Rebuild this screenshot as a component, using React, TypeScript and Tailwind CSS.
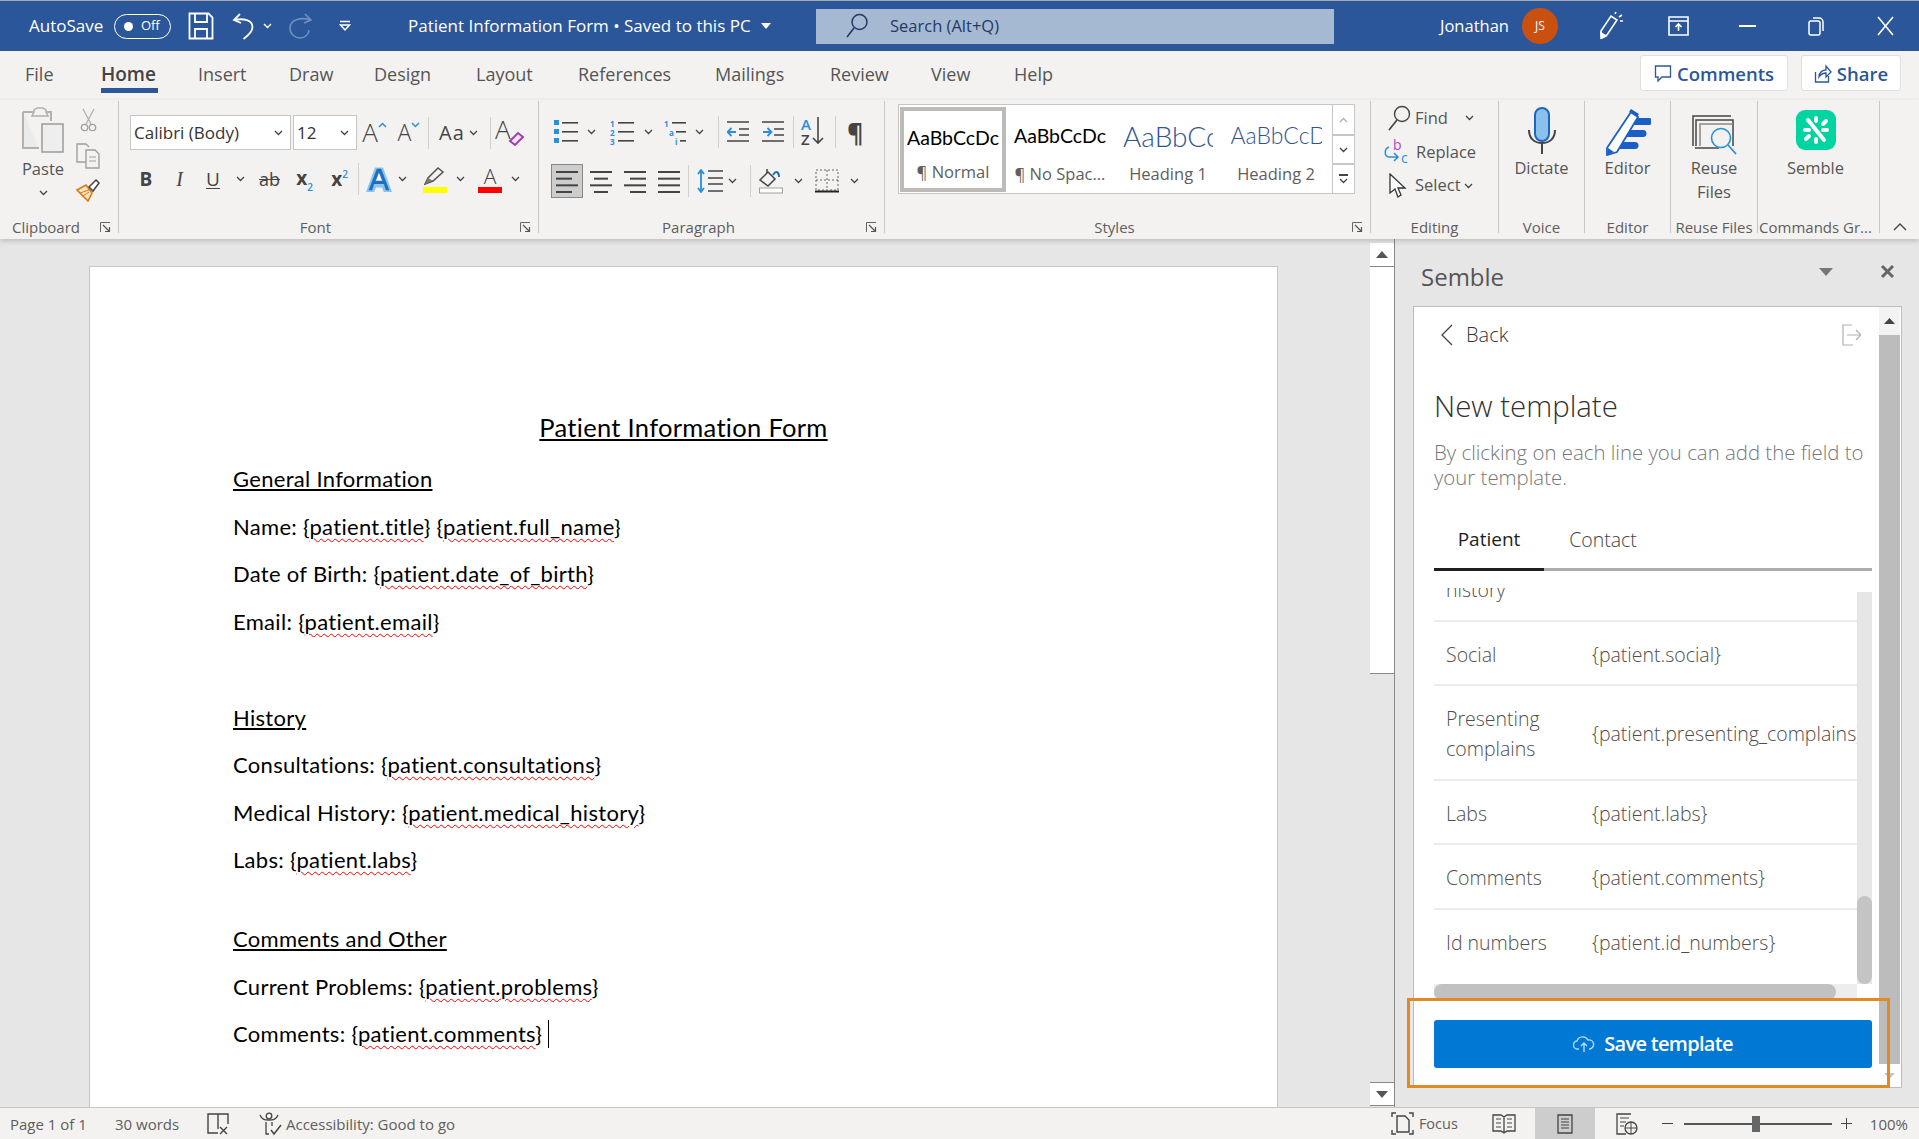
import React from 'react';

const DARK = '#444444';
const BLUE = '#2b8fd8';

function Chev({ className = '' }: { className?: string }) {
  return (
    <svg width="9" height="6" viewBox="0 0 9 6" className={className}>
      <path d="M1 1l3.5 3.5L8 1" fill="none" stroke={DARK} strokeWidth="1.3" />
    </svg>
  );
}

function Launcher() {
  return (
    <svg width="11" height="11" viewBox="0 0 11 11">
      <path d="M.5 10V.5H10" fill="none" stroke="#666" />
      <path d="M3 3l6 6M9.5 5v4.5H5" fill="none" stroke="#555" strokeWidth="1.2" />
    </svg>
  );
}

function Sep({ h = 'h-[32px]' }: { h?: string }) {
  return <div className={`w-px bg-[#d2d0ce] ${h}`} />;
}

// one ribbon group, label row sticks out a little under the divider
function Group({ w, label, launcher, labelClass = '', children }: { w: string; label: string; launcher?: boolean; labelClass?: string; children: React.ReactNode }) {
  return (
    <div className={`flex h-[132px] shrink-0 flex-col border-r border-[#c8c6c4] ${w}`}>
      <div className="h-[117px] shrink-0">{children}</div>
      <div className="-mb-[3px] flex h-[18px] shrink-0 items-center text-[15px] text-[#605e5c]">
        <div className={`min-w-0 flex-1 whitespace-nowrap text-center ${labelClass}`}>{label}</div>
        {launcher && (
          <div className="flex w-[26px] justify-center pl-[1px]">
            <Launcher />
          </div>
        )}
      </div>
    </div>
  );
}

function Lines({ rows, w = 33 }: { rows: [number, number][]; w?: number }) {
  return (
    <svg width={w} height="26" viewBox={`0 0 ${w} 26`}>
      {rows.map(([x, len], i) => (
        <rect key={i} x={x} y={3 + i * (20 / (rows.length - 1))} width={len} height="2" fill={DARK} />
      ))}
    </svg>
  );
}

function TitleBar() {
  return (
    <div className="flex h-[51px] shrink-0 items-center border-t border-[#a9a9a9] bg-[#2b579a] text-white">
      <div className="ml-[29px] w-[85px] whitespace-nowrap text-[17px]">AutoSave</div>
      <div className="flex h-[25px] w-[57px] items-center rounded-full border-[1.5px] border-white pl-[9px]">
        <div className="h-[9px] w-[9px] rounded-full bg-white" />
        <span className="ml-[8px] text-[13px]">Off</span>
      </div>
      <svg width="26" height="28" viewBox="0 0 26 28" className="ml-[17px]">
        <path d="M1.5 1.5h19l4 4v21h-23z" fill="none" stroke="#fff" strokeWidth="1.8" />
        <path d="M7 2v8h12V2M7 26v-9h12v9" fill="none" stroke="#fff" strokeWidth="1.8" />
      </svg>
      <svg width="25" height="27" viewBox="0 0 25 27" className="ml-[18px]">
        <path d="M8 1L2 7l7 3M2.5 7c9-2 18 0 18 7 0 5-5 9-9 12" fill="none" stroke="#fff" strokeWidth="1.8" />
      </svg>
      <svg width="9" height="6" viewBox="0 0 9 6" className="ml-[6px]">
        <path d="M1 1l3.5 3.5L8 1" fill="none" stroke="#fff" strokeWidth="1.4" />
      </svg>
      <svg width="25" height="27" viewBox="0 0 25 27" className="ml-[16px]">
        <path d="M17 1l6 6-7 3M22 7C14 4 2 6 2 15c0 6 5 10 10 10s9-4 9-8" fill="none" stroke="#6f8fbd" strokeWidth="1.6" />
      </svg>
      <svg width="12" height="12" viewBox="0 0 12 12" className="ml-[26px]">
        <path d="M1 1.5h10M1.5 5h9L6 10z" fill="none" stroke="#fff" strokeWidth="1.5" />
      </svg>
      <div className="ml-[57px] w-[351px] whitespace-nowrap text-[17px]">Patient Information Form • Saved to this PC</div>
      <svg width="10" height="6" viewBox="0 0 10 6" className="ml-[2px]">
        <path d="M0 0h10L5 6z" fill="#fff" />
      </svg>
      <div className="ml-[45px] flex h-[35px] w-[518px] items-center bg-[#a6b9d3] text-[#1f3a63]">
        <svg width="24" height="26" viewBox="0 0 24 26" className="ml-[29px]">
          <circle cx="14.5" cy="9" r="7.5" fill="none" stroke="#1f3a63" strokeWidth="1.5" />
          <path d="M9 15L2 24" stroke="#1f3a63" strokeWidth="1.6" />
        </svg>
        <span className="ml-[21px] text-[16.5px]">Search (Alt+Q)</span>
      </div>
      <div className="ml-[106px] w-[82px] whitespace-nowrap text-[16.5px]">Jonathan</div>
      <div className="flex h-[36px] w-[36px] items-center justify-center rounded-full bg-[#ca5010] text-[12px]">JS</div>
      <svg width="25" height="30" viewBox="0 0 25 30" className="ml-[40px]">
        <path d="M3 20L13 5l6 4L9 24l-6 3z" fill="none" stroke="#fff" strokeWidth="1.6" />
        <path d="M3 22l5 3-4 2zM17 3l1-2M21 6l3-2M22 10h3" stroke="#fff" strokeWidth="1.6" fill="#fff" />
      </svg>
      <svg width="21" height="20" viewBox="0 0 21 20" className="ml-[45px]">
        <path d="M1 1h19v18H1zM1 5h19" fill="none" stroke="#fff" strokeWidth="1.6" />
        <path d="M10.500 15V8M7.500 11l3-3 3 3" fill="none" stroke="#fff" strokeWidth="1.6" />
      </svg>
      <div className="ml-[50px] h-[2px] w-[17px] bg-white" />
      <svg width="17" height="20" viewBox="0 0 17 20" className="ml-[52px]">
        <rect x="1" y="5" width="11" height="14" rx="2" fill="none" stroke="#fff" strokeWidth="1.5" />
        <path d="M5 2h6a4 4 0 0 1 4 4v9" fill="none" stroke="#fff" strokeWidth="1.5" />
      </svg>
      <svg width="17" height="20" viewBox="0 0 17 20" className="ml-[52px]">
        <path d="M1 1l15 18M16 1L1 19" stroke="#fff" strokeWidth="1.6" />
      </svg>
    </div>
  );
}

function TabRow() {
  const tabs: [string, string][] = [
    ['File', 'w-[76px]'],
    ['Home', 'w-[97px]'],
    ['Insert', 'w-[91px]'],
    ['Draw', 'w-[85px]'],
    ['Design', 'w-[102px]'],
    ['Layout', 'w-[102px]'],
    ['References', 'w-[137px]'],
    ['Mailings', 'w-[115px]'],
    ['Review', 'w-[101px]'],
    ['View', 'w-[83px]'],
    ['Help', 'w-[80px]'],
  ];
  return (
    <div className="flex h-[49px] shrink-0 bg-[#f3f2f1] pl-[25px]">
      {tabs.map(([name, w]) => (
        <div key={name} className={`${w} pt-[10px]`}>
          <div className={`h-[27px] leading-[27px] ${name === 'Home' ? 'text-[19px] font-semibold text-[#444]' : 'text-[18px] text-[#555]'}`}>{name}</div>
          {name === 'Home' && <div className="h-[5px] w-[57px] bg-[#2b579a]" />}
        </div>
      ))}
      <div className="ml-auto flex pt-[4px] pr-[18px]">
        <div className="flex h-[36px] w-[148px] items-center justify-center rounded-[3px] border border-[#e1dfdd] bg-white pt-[1px] text-[18.5px] font-semibold text-[#2b579a]">
          <svg width="18" height="20" viewBox="0 0 18 20" className="mr-[5px]">
            <path d="M1.500 2h15v11H8l-4 4v-4H1.500z" fill="none" stroke="#2b579a" strokeWidth="1.3" />
          </svg>
          Comments
        </div>
        <div className="ml-[13px] flex h-[36px] w-[100px] items-center justify-center rounded-[3px] border border-[#e1dfdd] bg-white pt-[1px] text-[18.5px] font-semibold text-[#2b579a]">
          <svg width="18" height="20" viewBox="0 0 18 20" className="mr-[5px]">
            <path d="M1.500 8v10h13v-6M5 13c0-5 4-7 7-7V2l5 6-5 5V9c-3 0-5 1-7 4z" fill="none" stroke="#2b579a" strokeWidth="1.3" />
          </svg>
          Share
        </div>
      </div>
    </div>
  );
}

function Clipboard() {
  return (
    <Group w="w-[119px]" label="Clipboard" launcher>
      <div className="flex pt-[6px]">
        <div className="ml-[19px] flex w-[48px] flex-col items-center">
          <svg width="42" height="46" viewBox="0 0 42 46">
            <path d="M1 5h11M24 5h5v9M1 5v36h16" fill="#ebebeb" stroke="#b3b0ad" strokeWidth="2" />
            <path d="M12 5V3l3-2h6l3 2v2l2 4H10z" fill="#f3f2f1" stroke="#b3b0ad" strokeWidth="1.5" />
            <rect x="20" y="17" width="21" height="28" fill="#eeeeee" stroke="#a19f9d" strokeWidth="1.6" />
          </svg>
          <div className="mt-[5px] text-[16.5px] leading-[22px] text-[#555]">Paste</div>
          <Chev className="mt-[10px]" />
        </div>
        <div className="ml-[6px] flex w-[30px] flex-col items-center pt-[1px]">
          <svg width="17" height="24" viewBox="0 0 17 24">
            <path d="M3 1l8 15M14 1L6 16" stroke="#b3b0ad" strokeWidth="1.3" />
            <circle cx="4.500" cy="19.500" r="3.200" fill="none" stroke="#a19f9d" strokeWidth="1.3" />
            <circle cx="12.500" cy="19.500" r="3.200" fill="none" stroke="#a19f9d" strokeWidth="1.3" />
          </svg>
          <svg width="24" height="26" viewBox="0 0 24 26" className="mt-[11px]">
            <path d="M10 19H1V1h9l3 3" fill="none" stroke="#a19f9d" strokeWidth="1.4" />
            <path d="M10 7h9l4 4v14H10z" fill="#f3f2f1" stroke="#a19f9d" strokeWidth="1.4" />
            <path d="M13 14h7M13 18h7" stroke="#a19f9d" />
          </svg>
          <svg width="24" height="23" viewBox="0 0 24 23" className="mt-[10px]">
            <path d="M1 11l9-5 6 8-4 8z" fill="#fbe3c8" stroke="#d87b12" strokeWidth="1.6" />
            <path d="M4 14l9-3M7 17l6-4" stroke="#d87b12" />
            <path d="M13 8l7-7 3 3-6 8z" fill="#fff" stroke="#444" strokeWidth="1.5" />
          </svg>
        </div>
      </div>
    </Group>
  );
}

function Font() {
  return (
    <Group w="w-[420px]" label="Font" launcher>
      <div className="mt-[14px] flex h-[35px] items-center pl-[11px]">
        <div className="flex h-[35px] w-[161px] items-center justify-between border border-[#c8c6c4] bg-white pl-[3px] pr-[7px] text-[17px] text-[#333]">
          Calibri (Body) <Chev />
        </div>
        <div className="ml-[2px] flex h-[35px] w-[64px] items-center justify-between border border-[#c8c6c4] bg-white pl-[3px] pr-[7px] text-[17px] text-[#333]">
          12 <Chev />
        </div>
        <div className="flex w-[33px] items-start justify-center pl-[2px] text-[26px] font-light leading-[35px] text-[#444]">
          A
          <svg width="9" height="6" viewBox="0 0 9 6" className="mt-[7px]">
            <path d="M1 5l3.500-3.500L8 5" fill="none" stroke={BLUE} strokeWidth="1.5" />
          </svg>
        </div>
        <div className="flex w-[38px] items-start justify-center text-[23px] font-light leading-[35px] text-[#444]">
          A
          <svg width="9" height="6" viewBox="0 0 9 6" className="mt-[7px]">
            <path d="M1 1l3.500 3.500L8 1" fill="none" stroke={BLUE} strokeWidth="1.5" />
          </svg>
        </div>
        <Sep />
        <div className="flex w-[61px] items-center justify-center gap-[4px] pr-[2px] text-[20px] tracking-[1px] text-[#444]">
          Aa <Chev />
        </div>
        <Sep />
        <svg width="30" height="30" viewBox="0 0 30 30" className="ml-[4px]">
          <text x="0" y="21" fontFamily="Open Sans" fontSize="26" fontWeight="300" fill="#444">A</text>
          <path d="M15 23l8-8 5 4-8 8z" fill="#f3e3f6" stroke="#9e3fb0" strokeWidth="2" />
        </svg>
      </div>
      <div className="mt-[12px] flex h-[34px] items-center pl-[11px] text-[#444]">
        <div className="w-[32px] text-center text-[19px] font-bold">B</div>
        <div className="w-[35px] text-center font-['Liberation_Serif',serif] text-[20px] italic">I</div>
        <div className="w-[32px] text-center text-[19px] underline underline-offset-2">U</div>
        <div className="flex w-[22px] justify-center"><Chev /></div>
        <div className="w-[37px] text-center text-[18px] line-through">ab</div>
        <div className="w-[33px] text-center text-[19px] font-bold">
          x<span className="align-[-6px] text-[10px] font-semibold text-[#2b8fd8]">2</span>
        </div>
        <div className="w-[37px] text-center text-[19px] font-bold">
          x<span className="align-[8px] text-[10px] font-semibold text-[#2b8fd8]">2</span>
        </div>
        <Sep />
        <svg width="26" height="26" viewBox="0 0 26 26" className="ml-[7px]">
          <path d="M2 25L10 3h6l8 22h-5l-2-5H9l-2 5z" fill="#fff" stroke="#8cc4ec" strokeWidth="3" />
          <path d="M3 24L11 3h4l8 21h-3l-2-6H8l-2 6zM9.500 15h7L13 6z" fill="#1d6fc0" stroke="#1d6fc0" strokeWidth="0.5" fillRule="evenodd" />
        </svg>
        <Chev className="ml-[6px]" />
        <div className="ml-[16px] flex w-[24px] flex-col items-center">
          <svg width="22" height="20" viewBox="0 0 22 20">
            <path d="M1 18l3-6L14 2l5 4L9 15z" fill="none" stroke="#555" strokeWidth="1.5" />
            <path d="M1 18l3-6 5 3z" fill="#777" />
          </svg>
          <div className="mt-[1px] h-[6px] w-[24px] bg-[#ffff00]" />
        </div>
        <Chev className="ml-[9px]" />
        <div className="ml-[13px] flex w-[24px] flex-col items-center">
          <span className="h-[20px] text-[21px] font-light leading-[20px]">A</span>
          <div className="mt-[1px] h-[6px] w-[24px] bg-[#ff0000]" />
        </div>
        <Chev className="ml-[9px]" />
      </div>
    </Group>
  );
}

function BulletIcon() {
  return (
    <svg width="24" height="24" viewBox="0 0 24 24">
      {[2, 11, 20].map((y) => (
        <g key={y}>
          <rect x="0" y={y - 2} width="5" height="5" fill={BLUE} />
          <rect x="8" y={y} width="16" height="1.600" fill={DARK} />
        </g>
      ))}
    </svg>
  );
}

function NumberIcon({ className = '' }: { className?: string }) {
  return (
    <svg width="24" height="28" viewBox="0 0 24 28" className={className}>
      {['1', '2', '3'].map((n, i) => (
        <g key={n}>
          <text x="0" y={9 + i * 9} fontFamily="Open Sans" fontSize="8" fontWeight="700" fill={BLUE}>{n}</text>
          <rect x="8" y={4 + i * 9} width="16" height="1.600" fill={DARK} />
        </g>
      ))}
    </svg>
  );
}

function Paragraph() {
  return (
    <Group w="w-[346px]" label="Paragraph" launcher>
      <div className="mt-[15px] flex h-[32px] items-center pl-[15px]">
        <BulletIcon />
        <Chev className="ml-[9px]" />
        <NumberIcon className="ml-[14px]" />
        <Chev className="ml-[10px]" />
        <svg width="24" height="28" viewBox="0 0 24 28" className="ml-[11px]">
          <text x="0" y="9" fontFamily="Open Sans" fontSize="8" fontWeight="700" fill={BLUE}>1</text>
          <text x="5" y="18" fontFamily="Open Sans" fontSize="8" fontWeight="700" fill={BLUE}>a</text>
          <text x="11" y="27" fontFamily="Open Sans" fontSize="8" fontWeight="700" fill={BLUE}>i</text>
          <rect x="8" y="4" width="14" height="1.600" fill={DARK} />
          <rect x="12" y="13" width="10" height="1.600" fill={DARK} />
          <rect x="16" y="22" width="6" height="1.600" fill={DARK} />
        </svg>
        <Chev className="ml-[7px]" />
        <div className="ml-[14px]"><Sep /></div>
        <svg width="23" height="22" viewBox="0 0 23 22" className="ml-[8px]">
          <path d="M0 1h22M12 8h10M12 14h10M0 20h22" stroke={DARK} strokeWidth="1.600" />
          <path d="M9 11H1M4.500 7l-4 4 4 4" fill="none" stroke={BLUE} strokeWidth="1.800" />
        </svg>
        <svg width="23" height="22" viewBox="0 0 23 22" className="ml-[12px]">
          <path d="M0 1h22M12 8h10M12 14h10M0 20h22" stroke={DARK} strokeWidth="1.600" />
          <path d="M1 11h8M5.500 7l4 4-4 4" fill="none" stroke={BLUE} strokeWidth="1.800" />
        </svg>
        <div className="ml-[8px]"><Sep /></div>
        <div className="ml-[7px] flex w-[25px] items-stretch">
          <div className="flex flex-col text-[15px] font-semibold leading-[15px]">
            <span className="text-[#2b8fd8]">A</span>
            <span className="text-[#444]">Z</span>
          </div>
          <svg width="12" height="28" viewBox="0 0 12 28" className="ml-[1px]">
            <path d="M6 0v26M1 21l5 5 5-5" fill="none" stroke={DARK} strokeWidth="1.600" />
          </svg>
        </div>
        <div className="ml-[9px]"><Sep /></div>
        <div className="ml-[11px] text-[25px] font-bold leading-[32px] text-[#444]">¶</div>
      </div>
      <div className="mt-[16px] flex h-[34px] items-center pl-[12px]">
        <div className="flex h-[34px] w-[32px] items-center justify-center border border-[#8a8886] bg-[#cdcdcd]">
          <Lines w={22} rows={[[0, 22], [0, 16], [0, 22], [0, 16]]} />
        </div>
        <div className="ml-[7px]"><Lines w={22} rows={[[0, 22], [4, 14], [0, 22], [4, 14]]} /></div>
        <div className="ml-[12px]"><Lines w={22} rows={[[0, 22], [6, 16], [0, 22], [6, 16]]} /></div>
        <div className="ml-[12px]"><Lines w={22} rows={[[0, 22], [0, 22], [0, 22], [0, 22]]} /></div>
        <div className="ml-[8px]"><Sep /></div>
        <svg width="26" height="24" viewBox="0 0 26 24" className="ml-[8px]">
          <path d="M4 1v22M1 5l3-4 3 4M1 19l3 4 3-4" fill="none" stroke={BLUE} strokeWidth="1.800" />
          <path d="M11 2h15M11 9h15M11 15h15M11 22h15" stroke={DARK} strokeWidth="1.600" />
        </svg>
        <Chev className="ml-[5px]" />
        <div className="ml-[13px]"><Sep /></div>
        <svg width="26" height="26" viewBox="0 0 26 26" className="ml-[7px]">
          <path d="M2 12l8-8 7 7-7 7z" fill="none" stroke={DARK} strokeWidth="1.500" />
          <path d="M9 5V1" stroke={DARK} strokeWidth="1.500" />
          <path d="M15 7c3-5 6-3 6 2" fill="none" stroke="#1d6fc0" strokeWidth="2" />
          <rect x="1.500" y="20" width="23" height="5" fill="#fff" stroke="#a19f9d" />
        </svg>
        <Chev className="ml-[10px]" />
        <svg width="24" height="24" viewBox="0 0 24 24" className="ml-[12px]">
          <path d="M1 1h22v20H1zM12 1v20M1 11h22" fill="none" stroke="#666" strokeDasharray="2 2" />
          <rect x="0" y="21.500" width="24" height="2" fill="#222" />
        </svg>
        <Chev className="ml-[11px]" />
      </div>
    </Group>
  );
}

function StyleCell({ label, w, children }: { label: string; w: string; children: React.ReactNode }) {
  return (
    <div className={`flex shrink-0 flex-col items-center overflow-hidden ${w}`}>
      <div className="flex h-[58px] items-center overflow-hidden whitespace-nowrap pt-[3px]">{children}</div>
      <div className="whitespace-nowrap text-[16.5px] leading-[22px] text-[#605e5c]">{label}</div>
    </div>
  );
}

function Styles() {
  return (
    <Group w="w-[486px]" label="Styles" launcher>
      <div className="ml-[13px] mt-[3px] flex h-[90px] w-[457px] border border-[#c8c6c4] bg-white">
        <div className="ml-[1px] mt-[2px] flex h-[85px] w-[106px] shrink-0 flex-col items-center border-[4px] border-[#bdbbb9]">
          <div className="flex h-[50px] items-center pt-[3px] font-['Lato',sans-serif] text-[19.500px] text-black">AaBbCcDc</div>
          <div className="whitespace-nowrap text-[16.5px] leading-[22px] text-[#605e5c]">¶ Normal</div>
        </div>
        <StyleCell w="w-[108px]" label="¶ No Spac...">
          <span className="font-['Lato',sans-serif] text-[19.500px] text-black">AaBbCcDc</span>
        </StyleCell>
        <StyleCell w="w-[108px]" label="Heading 1">
          <span className="w-[90px] overflow-hidden font-['Lato',sans-serif] text-[28px] font-light text-[#2f5496]">AaBbCc</span>
        </StyleCell>
        <StyleCell w="w-[108px]" label="Heading 2">
          <span className="w-[91px] overflow-hidden font-['Lato',sans-serif] text-[23px] font-light text-[#2f5496]">AaBbCcD</span>
        </StyleCell>
        <div className="ml-auto flex w-[22px] flex-col border-l border-[#c8c6c4]">
          <div className="flex h-[31px] items-center justify-center border-b-2 border-[#c8c6c4]">
            <svg width="9" height="6" viewBox="0 0 9 6"><path d="M1 5l3.500-3.500L8 5" fill="none" stroke="#b3b0ad" strokeWidth="1.300" /></svg>
          </div>
          <div className="flex h-[29px] items-center justify-center border-b-2 border-[#c8c6c4]"><Chev /></div>
          <div className="flex flex-1 flex-col items-center justify-center gap-[2px]">
            <div className="h-[1.500px] w-[9px] bg-[#444]" />
            <Chev />
          </div>
        </div>
      </div>
    </Group>
  );
}

function Editing() {
  return (
    <Group w="w-[128px]" label="Editing">
      <div className="flex h-[34px] items-center pl-[16px] text-[16.5px] text-[#555]">
        <svg width="24" height="27" viewBox="0 0 24 27">
          <circle cx="15" cy="9" r="7.500" fill="none" stroke="#444" strokeWidth="1.400" />
          <path d="M10 15l-8 10" stroke="#444" strokeWidth="1.700" />
        </svg>
        <span className="ml-[4px] w-[50px]">Find</span>
        <Chev />
      </div>
      <div className="flex h-[34px] items-center pl-[12px] text-[16.5px] text-[#555]">
        <svg width="28" height="26" viewBox="0 0 28 26">
          <text x="10" y="11" fontFamily="Open Sans" fontSize="14" fill="#b146c2">b</text>
          <text x="18" y="24" fontFamily="Open Sans" fontSize="14" fill="#2b8fd8">c</text>
          <path d="M6 8C1 10 1 17 6 18h9M11 14l4 4-4 4" fill="none" stroke="#2b8fd8" strokeWidth="1.500" />
        </svg>
        <span className="ml-[5px]">Replace</span>
      </div>
      <div className="flex h-[33px] items-center pl-[17px] text-[16.5px] text-[#555]">
        <svg width="20" height="26" viewBox="0 0 20 26">
          <path d="M2 1v19l5-4 3 8 3-2-3-7h7z" fill="#fff" stroke="#333" strokeWidth="1.300" />
        </svg>
        <span className="ml-[7px] mr-[3px]">Select</span>
        <Chev />
      </div>
    </Group>
  );
}

function BigItem({ w, label, line2, pad = '', children }: { w: string; label: string; line2?: string; pad?: string; children: React.ReactNode }) {
  return (
    <Group w={w} label={label} labelClass={pad}>
      <div className={`flex flex-col items-center text-[16.5px] leading-[24px] text-[#555] ${pad}`}>
        <div className="flex h-[55px] items-end">{children}</div>
        <div>{line2 ? line2.split('|')[0] : label}</div>
        {line2 && <div>{line2.split('|')[1]}</div>}
      </div>
    </Group>
  );
}

function SembleLogo() {
  return (
    <svg width="40" height="40" viewBox="0 0 40 40">
      <rect width="40" height="40" rx="9" fill="#00d4a0" />
      <path d="M12 10l16 20" stroke="#fff" strokeWidth="4" strokeLinecap="round" />
      <g stroke="#fff" strokeWidth="4" strokeLinecap="round">
        <path d="M20 8v3M30 11l-3 3M9 20l4 0M13 26l-3 3M20 29v3M27 20l4 0" />
      </g>
    </svg>
  );
}

function Ribbon() {
  return (
    <div className="z-10 flex h-[139px] shrink-0 bg-[#f3f2f1] pt-[1px] shadow-[0_2px_5px_rgba(0,0,0,0.18)]">
      <Clipboard />
      <Font />
      <Paragraph />
      <Styles />
      <Editing />
      <BigItem w="w-[86px]" label="Voice" line2="Dictate|">
        <svg width="30" height="48" viewBox="0 0 30 48" className="mb-[1px]">
          <rect x="8" y="1" width="14" height="33" rx="7" fill="#8cc0ec" stroke="#1b66c0" strokeWidth="2" />
          <path d="M2 23c0 9 6 13 13 13s13-4 13-13M15 36v11" fill="none" stroke="#444" strokeWidth="2" />
        </svg>
      </BigItem>
      <BigItem w="w-[86px]" label="Editor">
        <svg width="46" height="48" viewBox="0 0 46 48">
          <path d="M26 10h18a3 3 0 0 1 0 7H22zM18 22h20a3 3 0 0 1 0 7H12zM12 34h18a3 3 0 0 1 0 7H6z" fill="#1b5fc6" />
          <path d="M2 40L26 4l7 5L12 44l-10 3z" fill="#fff" stroke="#1b5fc6" strokeWidth="1.800" />
          <path d="M26 1l8 5-2 3-8-5z" fill="#1b5fc6" />
          <path d="M2 47l1-7 6 4z" fill="#1b5fc6" />
        </svg>
      </BigItem>
      <BigItem w="w-[87px]" label="Reuse Files" line2="Reuse|Files">
        <svg width="46" height="42" viewBox="0 0 46 42">
          <path d="M2 32V2h38" fill="none" stroke="#444" strokeWidth="1.500" />
          <path d="M5 32V6h37v26" fill="none" stroke="#444" strokeWidth="1.500" />
          <path d="M9 32V10h33" fill="none" stroke="#888" strokeWidth="1.500" />
          <path d="M4 34h24" stroke="#444" strokeWidth="1.500" />
          <circle cx="30" cy="24" r="9.500" fill="#f3f2f1" stroke="#2b8fd8" strokeWidth="1.600" />
          <path d="M37 31l8 9" stroke="#2b8fd8" strokeWidth="1.800" />
        </svg>
      </BigItem>
      <BigItem w="w-[122px]" label="Commands Gr..." line2="Semble|" pad="pr-[6px]">
        <div className="mb-[6px]"><SembleLogo /></div>
      </BigItem>
      <div className="flex flex-1 items-end justify-center pb-[8px]">
        <svg width="14" height="9" viewBox="0 0 14 9"><path d="M1 8l6-6 6 6" fill="none" stroke="#444" strokeWidth="1.400" /></svg>
      </div>
    </div>
  );
}

function Squig({ children }: { children: React.ReactNode }) {
  return <span className="underline decoration-[#f00] decoration-wavy decoration-1 underline-offset-[3px]">{children}</span>;
}

function DocLine({ className = '', children }: { className?: string; children: React.ReactNode }) {
  return <div className={`h-[47.500px] leading-[47.500px] whitespace-nowrap ${className}`}>{children}</div>;
}

function Document() {
  return (
    <div className="flex w-[1395px] shrink-0">
      <div className="flex-1 pl-[89px] pt-[27px]">
        <div className="h-full w-[1189px] border border-b-0 border-[#c8c6c4] bg-white pl-[143px] pt-[136px] font-['Lato',sans-serif] text-[22px] tracking-[0.3px] text-black">
          <div className="-ml-[143px] mb-[4px] h-[48px] text-center text-[25.500px] leading-[48px] tracking-[0.3px] underline underline-offset-2">Patient Information Form</div>
          <DocLine className="underline underline-offset-2">General Information</DocLine>
          <DocLine>Name: {'{'}<Squig>patient.title</Squig>{'}'} {'{'}<Squig>patient.full_name</Squig>{'}'}</DocLine>
          <DocLine>Date of Birth: {'{'}<Squig>patient.date_of_birth</Squig>{'}'}</DocLine>
          <DocLine>Email: {'{'}<Squig>patient.email</Squig>{'}'}</DocLine>
          <div className="h-[48.500px]" />
          <DocLine className="underline underline-offset-2">History</DocLine>
          <DocLine>Consultations: {'{'}<Squig>patient.consultations</Squig>{'}'}</DocLine>
          <DocLine>Medical History: {'{'}<Squig>patient.medical_history</Squig>{'}'}</DocLine>
          <DocLine>Labs: {'{'}<Squig>patient.labs</Squig>{'}'}</DocLine>
          <div className="h-[31.500px]" />
          <DocLine className="underline underline-offset-2">Comments and Other</DocLine>
          <DocLine>Current Problems: {'{'}<Squig>patient.problems</Squig>{'}'}</DocLine>
          <DocLine className="flex items-center">
            <span>Comments: {'{'}<Squig>patient.comments</Squig>{'}'}</span>
            <span className="ml-[6px] h-[28px] w-px bg-black" />
          </DocLine>
        </div>
      </div>
      <div className="flex w-[25px] flex-col border-r border-[#8a8886] pt-[4px] pb-[1px]">
        <div className="flex h-[24px] items-center justify-center border-b border-[#8a8886] bg-white">
          <svg width="12" height="7" viewBox="0 0 12 7"><path d="M0 7l6-7 6 7z" fill="#555" /></svg>
        </div>
        <div className="h-[407px] border-b border-[#8a8886] bg-white" />
        <div className="flex-1" />
        <div className="flex h-[24px] items-center justify-center border-y border-[#8a8886] bg-white">
          <svg width="12" height="7" viewBox="0 0 12 7"><path d="M0 0l6 7 6-7z" fill="#555" /></svg>
        </div>
      </div>
    </div>
  );
}

const ROWS: [string, string, string][] = [
  ['Social', '{patient.social}', 'h-[64px]'],
  ['Presenting|complains', '{patient.presenting_complains}', 'h-[95px]'],
  ['Labs', '{patient.labs}', 'h-[64px]'],
  ['Comments', '{patient.comments}', 'h-[65px]'],
];

function FieldList() {
  return (
    <div className="mt-[17px] flex h-[412px] w-[438px] text-[19.500px] font-light leading-[30px] text-[#504e4c]">
      <div className="flex w-[423px] flex-col overflow-hidden">
        <div className="flex h-[34px] shrink-0 flex-col justify-end overflow-hidden border-b-2 border-[#edebe9] pb-[15px] pl-[12px]">
          <div>history</div>
        </div>
        {ROWS.map(([label, value, h]) => (
          <div key={value} className={`flex shrink-0 items-center border-b-2 border-[#edebe9] pt-[3px] ${h}`}>
            <div className="w-[158px] shrink-0 pl-[12px]">
              {label.split('|').map((l) => <div key={l}>{l}</div>)}
            </div>
            <div className="whitespace-nowrap">{value}</div>
          </div>
        ))}
        <div className="flex shrink-0 items-center py-[18px]">
          <div className="w-[158px] shrink-0 pl-[12px]">Id numbers</div>
          <div className="whitespace-nowrap">{'{patient.id_numbers}'}</div>
        </div>
        <div className="mt-auto h-[16px] shrink-0 bg-[#ededed]">
          <div className="h-[16px] w-[402px] rounded-full bg-[#c1c1c1]" />
        </div>
      </div>
      <div className="mb-[16px] mt-[4px] flex w-[15px] flex-col justify-end bg-[#e6e6e6]">
        <div className="h-[88px] rounded-full bg-[#c4c4c4]" />
      </div>
    </div>
  );
}

function SidePane() {
  return (
    <div className="relative min-w-0 flex-1 bg-[#e6e6e6]">
      <div className="flex h-[67px] items-center pl-[26px] pt-[8px]">
        <div className="text-[24px] text-[#555]">Semble</div>
        <svg width="14" height="8" viewBox="0 0 14 8" className="-mt-[10px] ml-auto"><path d="M0 0h14L7 8z" fill="#777" /></svg>
        <svg width="15" height="15" viewBox="0 0 15 15" className="-mt-[10px] ml-[47px] mr-[24px]"><path d="M2 2l11 11M13 2L2 13" stroke="#666" strokeWidth="3" /></svg>
      </div>
      <div className="ml-[18px] flex h-[782px] w-[489px] border border-[#bdbdbd] bg-white">
        <div className="w-[465px] pl-[20px]">
          <div className="flex h-[56px] items-center justify-between pl-[6px] pr-[18px]">
            <div className="flex items-center text-[20px] text-[#333]">
              <svg width="13" height="22" viewBox="0 0 13 22"><path d="M12 1L2 11l10 10" fill="none" stroke="#444" strokeWidth="1.300" /></svg>
              <span className="ml-[13px] font-light">Back</span>
            </div>
            <svg width="19" height="22" viewBox="0 0 19 22">
              <path d="M10 1H1v20h10M5 11h13M14 6l5 5-5 5" fill="none" stroke="#b3b0ad" strokeWidth="1.200" />
            </svg>
          </div>
          <div className="mt-[17px] h-[52px] text-[29.400px] font-light leading-[52px] text-[#323130]">New template</div>
          <div className="mt-[8px] w-[440px] text-[20.400px] font-light leading-[25px] text-[#777]">
            By clicking on each line you can add the field to your template.
          </div>
          <div className="mt-[21px] flex h-[60px] w-[438px] border-b-[3px] border-[#b0aca8] text-[19.500px]">
            <div className="-mb-[3px] flex h-[60px] w-[110px] items-center justify-center border-b-[3px] border-[#201f1e] text-[19px] font-normal text-[#201f1e]">Patient</div>
            <div className="flex h-[57px] w-[118px] items-center justify-center font-light text-[#444]">Contact</div>
          </div>
          <FieldList />
          <div className="mt-[20px] flex h-[48px] w-[438px] items-center justify-center rounded-[3px] bg-[#0078d4] text-[20px] font-semibold tracking-[-0.7px] text-white">
            <svg width="22" height="18" viewBox="0 0 22 18" className="mr-[9px]">
              <path d="M6 14H5a4 4 0 0 1-1-8 6 6 0 0 1 11-1 4.500 4.500 0 0 1 2 9h-1M11 17V8M8 11l3-3 3 3" fill="none" stroke="#b9dcf7" strokeWidth="1.400" />
            </svg>
            Save template
          </div>
        </div>
        <div className="flex w-[21px] flex-col">
          <div className="flex h-[28px] items-center justify-center bg-[#f3f3f3]">
            <svg width="11" height="6" viewBox="0 0 11 6"><path d="M0 6l5.500-6 5.500 6z" fill="#444" /></svg>
          </div>
          <div className="flex-1 bg-[#bcbcbc]" />
          <div className="flex h-[23px] items-center justify-center bg-white">
            <svg width="11" height="6" viewBox="0 0 11 6"><path d="M0 0l5.500 6 5.500-6z" fill="#c8c6c4" /></svg>
          </div>
        </div>
      </div>
      <div className="absolute left-[12px] top-[759px] h-[90px] w-[483px] border-[3px] border-[#e08a25]" />
    </div>
  );
}

function StatusBar() {
  return (
    <div className="flex h-[32px] shrink-0 items-center border-t border-[#c8c6c4] bg-[#f3f2f1] text-[15px] text-[#605e5c]">
      <span className="ml-[10px] w-[105px] pt-[1px]">Page 1 of 1</span>
      <span className="w-[92px] pt-[1px]">30 words</span>
      <svg width="23" height="22" viewBox="0 0 23 22">
        <path d="M11 20H1V1h10v15M11 1h10v10" fill="none" stroke="#444" strokeWidth="1.400" />
        <path d="M13 14l7 7M20 14l-7 7" stroke="#444" strokeWidth="1.400" />
      </svg>
      <svg width="26" height="24" viewBox="0 0 26 24" className="ml-[29px]">
        <circle cx="10" cy="4" r="2.800" fill="none" stroke="#444" strokeWidth="1.300" />
        <path d="M1 3c2 5 5 5 9 5s7 0 9-5M7 10v12h3M13 10v4" fill="none" stroke="#444" strokeWidth="1.300" />
        <path d="M12 18l3 4 7-9" fill="none" stroke="#444" strokeWidth="1.500" />
      </svg>
      <span className="ml-[1px] pt-[1px]">Accessibility: Good to go</span>
      <svg width="23" height="23" viewBox="0 0 23 23" className="ml-auto">
        <path d="M1 5V1h4M18 1h4v4M22 18v4h-4M5 22H1v-4" fill="none" stroke="#444" strokeWidth="1.400" />
        <path d="M6 4h8l4 4v12H6z" fill="none" stroke="#444" strokeWidth="1.400" />
      </svg>
      <span className="ml-[5px] pt-[1px] text-[14.500px]">Focus</span>
      <svg width="24" height="20" viewBox="0 0 24 20" className="ml-[34px]">
        <path d="M12 3v16M1 1h8l3 2 3-2h8v16h-8l-3 2-3-2H1z" fill="none" stroke="#444" strokeWidth="1.300" />
        <path d="M4 5h5M4 9h5M4 13h5M15 5h5M15 9h5M15 13h5" stroke="#444" />
      </svg>
      <div className="ml-[19px] flex h-[31px] w-[60px] items-center justify-center bg-[#cdcdcd]">
        <svg width="16" height="20" viewBox="0 0 16 20">
          <path d="M1 1h14v18H1z" fill="none" stroke="#444" strokeWidth="1.300" />
          <path d="M4 5h8M4 8h8M4 11h8M4 14h8" stroke="#444" strokeWidth="1.200" />
        </svg>
      </div>
      <svg width="22" height="22" viewBox="0 0 22 22" className="ml-[21px]">
        <path d="M15 1H1v20h9" fill="none" stroke="#444" strokeWidth="1.300" />
        <path d="M4 5h9M4 9h6M4 13h4" stroke="#444" />
        <circle cx="15" cy="15" r="6" fill="#f3f2f1" stroke="#444" strokeWidth="1.300" />
        <path d="M9 15h12M15 9v12" stroke="#444" />
      </svg>
      <div className="ml-[24px] h-px w-[11px] bg-[#444]" />
      <div className="relative ml-[11px] flex h-[16px] w-[148px] items-center">
        <div className="h-[2px] w-full bg-[#555]" />
        <div className="absolute left-[68px] h-[16px] w-[8px] bg-[#666]" />
      </div>
      <svg width="11" height="11" viewBox="0 0 11 11" className="ml-[9px]"><path d="M0 5.500h11M5.500 0v11" stroke="#444" /></svg>
      <span className="ml-[18px] mr-[11px] pt-[1px]">100%</span>
    </div>
  );
}

export default function App() {
  return (
    <div className="flex h-[1139px] w-[1919px] flex-col overflow-hidden bg-[#e6e6e6] font-['Open_Sans',sans-serif]">
      <TitleBar />
      <TabRow />
      <Ribbon />
      <div className="flex min-h-0 flex-1">
        <Document />
        <SidePane />
      </div>
      <StatusBar />
    </div>
  );
}
